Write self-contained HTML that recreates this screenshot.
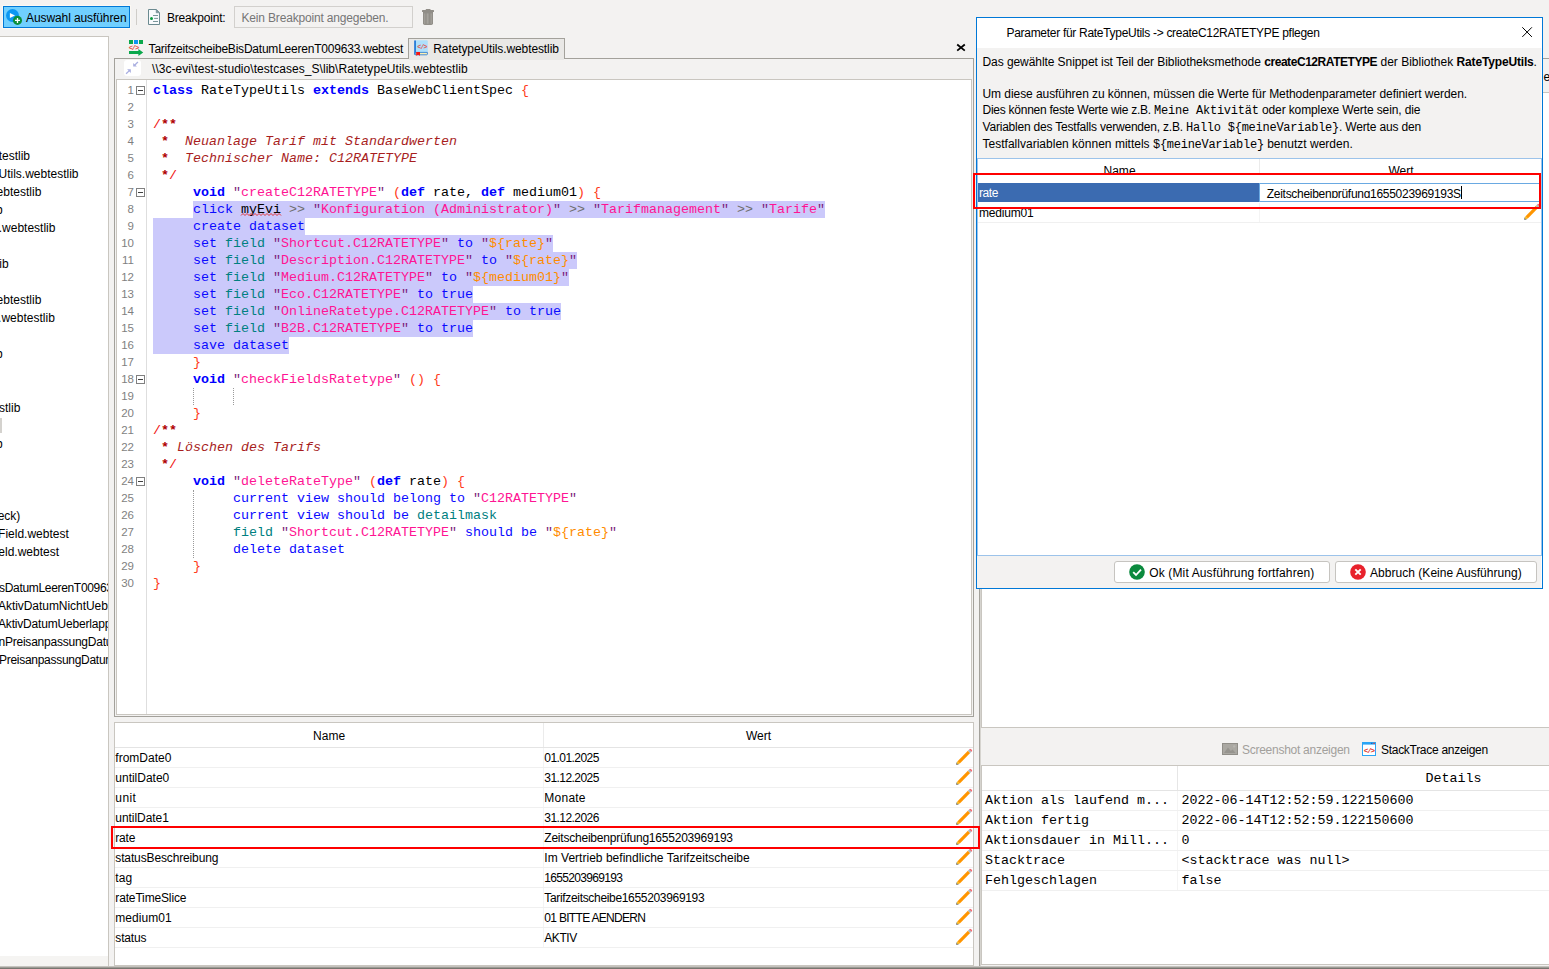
<!DOCTYPE html>
<html lang="de"><head><meta charset="utf-8"><title>Test Studio</title>
<style>
html,body{margin:0;padding:0;}
body{width:1549px;height:969px;overflow:hidden;background:#f3f2f1;font-family:"Liberation Sans", sans-serif;font-size:12px;color:#000;}
.b{position:absolute;box-sizing:border-box;}
.t{position:absolute;white-space:pre;}
.tm{font-family:"Liberation Mono", monospace;}
svg{position:absolute;overflow:visible;}
.c{position:absolute;white-space:pre;font-family:"Liberation Mono", monospace;font-size:13.33px;line-height:17px;height:17px;left:0;}
.ln{position:absolute;font-size:11.5px;line-height:17px;height:17px;color:#7f7f7f;text-align:right;width:40px;}

.k{color:#0000ff;font-weight:bold}.d{color:#0a0aff}.f{color:#008080}.q{color:#7d1f7d}.s{color:#ff1493}
.v{color:#ff8c00}.p{color:#ff3a1a}.g{color:#6e6e6e}.m{color:#b00000;font-weight:bold}.sl{color:#f01010}
.ci{color:#a81e1e;font-style:italic}.id{color:#000}.ib{color:#000;font-weight:bold}
.sel{position:absolute;background:#cbc9fb;height:17px}
.fold{position:absolute;width:9px;height:9px;box-sizing:border-box;border:1px solid #808080;background:#fff;left:19px}
.fold:after{content:"";position:absolute;left:1px;top:3px;width:5px;height:1px;background:#404040}
.ig{position:absolute;width:0;border-left:1px dotted #9a9a9a}
</style></head>
<body>
<div class="b" style="left:0px;top:0px;width:1549px;height:969px;background:#f3f2f1;overflow:hidden;"><div class="b" style="left:3px;top:6px;width:127px;height:22px;background:#70cfff;border:1px solid #0078d7;box-shadow:0 0 0 1px #fbf8f3;"></div>
<svg style="left:5px;top:8px" width="19" height="18" viewBox="0 0 19 18"><circle cx="7.5" cy="7.5" r="6.5" fill="#0c98f2"/><path d="M4.9 4.9 L10 7.5 L4.9 10.1 Z" fill="#fff"/><circle cx="12.5" cy="12.4" r="4.55" fill="#0b8f3c"/><path d="M12.5 9.9 V14.9 M10 12.4 H15" stroke="#fff" stroke-width="1.3"/></svg><span class="t" style="top:10.34px;line-height:17px;left:26.00px;letter-spacing:-0.093px;">Auswahl ausführen</span><div class="b" style="left:136px;top:9px;width:1px;height:16px;background:#cfcdc9;"></div>
<svg style="left:148px;top:9px" width="12" height="16" viewBox="0 0 12 16"><path d="M0.5 0.5 H8.3 L11.5 3.7 V15.5 H0.5 Z" fill="#f8fafc" stroke="#6b8a90" stroke-width="1"/><path d="M8.2 0.6 V3.8 H11.4 Z" fill="#7d989d" stroke="#6b8a90" stroke-width="0.6"/><circle cx="3.5" cy="9.4" r="1.5" fill="#0a9a40"/><path d="M5 6.5 H10 M6.1 9.4 H10 M5 12.5 H10" stroke="#6b8a90" stroke-width="0.9"/></svg><span class="t" style="top:10.34px;line-height:17px;left:167.00px;letter-spacing:-0.200px;">Breakpoint:</span><div class="b" style="left:234px;top:6px;width:179px;height:22px;border:1px solid #d2d0cd;background:#f3f2f1;"></div>
<span class="t" style="top:10.34px;line-height:17px;color:#767676;left:241.50px;letter-spacing:-0.171px;">Kein Breakpoint angegeben.</span><svg style="left:422px;top:9px" width="12" height="16" viewBox="0 0 12 16"><rect x="3.7" y="0" width="4.9" height="1.6" rx="0.6" fill="#908d87"/><rect x="0" y="0.9" width="12" height="2.1" rx="0.5" fill="#908d87"/><path d="M1 3 H11 V14.2 Q11 15.9 9.3 15.9 H2.7 Q1 15.9 1 14.2 Z" fill="#918e88"/><rect x="2" y="4.4" width="1.3" height="10.4" fill="#a19e98"/><rect x="4.7" y="4.4" width="1.9" height="10.4" fill="#a5a29c"/><rect x="8.5" y="4.4" width="1.5" height="10.4" fill="#a19e98"/></svg><div class="b" style="left:-2px;top:36px;width:111px;height:932px;background:#fff;border:1px solid #c9c6c0;overflow:hidden;"><span class="t" style="top:111.34px;line-height:17px;right:78.00px;">webtestlib</span><span class="t" style="top:129.34px;line-height:17px;right:29.50px;">Utils.webtestlib</span><span class="t" style="top:147.34px;line-height:17px;right:66.70px;">webtestlib</span><span class="t" style="top:165.34px;line-height:17px;right:105.40px;">lib</span><span class="t" style="top:183.34px;line-height:17px;right:52.60px;">.webtestlib</span><span class="t" style="top:219.34px;line-height:17px;right:99.30px;">lib</span><span class="t" style="top:255.34px;line-height:17px;right:66.70px;">webtestlib</span><span class="t" style="top:273.34px;line-height:17px;right:53.20px;">.webtestlib</span><span class="t" style="top:309.34px;line-height:17px;right:105.40px;">lib</span><span class="t" style="top:363.34px;line-height:17px;right:87.70px;">testlib</span><span class="t" style="top:399.34px;line-height:17px;right:105.40px;">lib</span><span class="t" style="top:471.34px;line-height:17px;right:87.70px;">check)</span><span class="t" style="top:489.34px;line-height:17px;right:39.20px;">Field.webtest</span><span class="t" style="top:507.34px;line-height:17px;right:49.00px;">Field.webtest</span><span class="t" style="top:543.34px;line-height:17px;left:0.00px;letter-spacing:-0.320px;">sDatumLeerenT0096</span><span class="t" style="top:543.34px;line-height:17px;left:107.30px;">33.webtest</span><span class="t" style="top:561.34px;line-height:17px;left:-1.00px;letter-spacing:-0.050px;">AktivDatumNichtUeb</span><span class="t" style="top:561.34px;line-height:17px;left:108.80px;">erlappend.webtest</span><span class="t" style="top:579.34px;line-height:17px;left:-1.00px;letter-spacing:-0.186px;">AktivDatumUeberlap</span><span class="t" style="top:579.34px;line-height:17px;left:105.70px;">pend.webtest</span><span class="t" style="top:597.34px;line-height:17px;left:-0.50px;letter-spacing:-0.228px;">nPreisanpassungDat</span><span class="t" style="top:597.34px;line-height:17px;left:106.80px;">um.webtest</span><span class="t" style="top:615.34px;line-height:17px;left:0.00px;letter-spacing:-0.284px;">PreisanpassungDatu</span><span class="t" style="top:615.34px;line-height:17px;left:106.30px;">m.webtest</span><div class="b" style="left:1px;top:381px;width:2px;height:15px;background:#d4d2ce;"></div>
<div class="b" style="left:0px;top:919px;width:109px;height:12px;background:#f5f4f2;"></div>
</div>
<div class="b" style="left:114px;top:58px;width:860px;height:1px;background:#a3a19b;"></div>
<div class="b" style="left:408px;top:38px;width:157px;height:21px;background:#e9e8e6;border:1px solid #a3a19b;border-bottom:none;"></div>
<div class="b" style="left:409px;top:58px;width:155px;height:2px;background:#e9e8e6;"></div>
<svg style="left:129px;top:40px" width="15" height="16" viewBox="0 0 15 16"><rect x="0" y="0" width="4" height="4" fill="#0aa84b"/><rect x="5" y="0" width="4" height="4" fill="#0d95f0"/><rect x="10" y="0" width="4" height="4" fill="#0aa84b"/><text x="-0.3" y="9.9" font-family="Liberation Mono" font-size="7" font-weight="bold" fill="#e0483e" letter-spacing="-1.05">&lt;/&gt;</text><path d="M0 11 H9.4 V9 L14.2 12.5 L9.4 16 V14 H0 Z" fill="#0aa84b"/></svg><span class="t" style="top:41.34px;line-height:17px;left:148.60px;letter-spacing:-0.215px;">TarifzeitscheibeBisDatumLeerenT009633.webtest</span><svg style="left:414px;top:40px" width="14" height="16" viewBox="0 0 14 16"><rect x="1.5" y="0.3" width="12.3" height="12.2" rx="1" fill="#aedffb"/><rect x="0.2" y="0.3" width="1.7" height="14.6" rx="0.8" fill="#1a73d6"/><path d="M1.2 12.4 H13.4 V14 Q13.4 14.8 12.6 14.8 H1.2 Z" fill="#ffeeb0" stroke="#1a73d6" stroke-width="0.8"/><path d="M2.2 11.9 H6 V15.8 L4.1 14.8 L2.2 15.8 Z" fill="#f5150f"/><text x="3.2" y="8.6" font-family="Liberation Mono" font-size="6.5" font-weight="bold" fill="#e0584f" letter-spacing="-0.7">&lt;/&gt;</text></svg><span class="t" style="top:41.34px;line-height:17px;left:433.30px;letter-spacing:-0.107px;">RatetypeUtils.webtestlib</span><svg style="left:956px;top:43px" width="10" height="9" viewBox="0 0 10 9"><path d="M1.2 1.5 L8.8 7.6 M8.8 1.5 L1.2 7.6" stroke="#000" stroke-width="1.8"/></svg><div class="b" style="left:114px;top:59px;width:860px;height:658px;border-left:1px solid #a3a19b;border-right:1px solid #a3a19b;border-bottom:1px solid #a3a19b;"></div>
<div class="b" style="left:124px;top:60px;width:17px;height:16px;background:#fff;border-radius:3px;"></div>
<svg style="left:124px;top:60px" width="17" height="16" viewBox="0 0 17 16"><path d="M13.9 2 L10.6 5.2" stroke="#a9aee0" stroke-width="1.3" fill="none"/><path d="M9.2 2.9 V6.6 H12.9 Z" fill="#a9aee0"/><path d="M2.1 13.8 L5.4 10.6" stroke="#a9aee0" stroke-width="1.3" fill="none"/><path d="M3.1 9.3 H6.8 V13 Z" fill="#a9aee0"/></svg><span class="t" style="top:61.34px;line-height:17px;left:152.00px;letter-spacing:0.046px;">\\3c-evi\test-studio\testcases_S\lib\RatetypeUtils.webtestlib</span><div class="b" style="left:116px;top:79px;width:856px;height:636px;background:#fff;border:1px solid #c9c6c0;overflow:hidden;"><div class="b" style="left:29px;top:0;width:1px;height:640px;background:#dedede"></div>
<div class="sel" style="left:76px;top:121px;width:632px"></div>
<div class="sel" style="left:36px;top:138px;width:152px"></div>
<div class="sel" style="left:36px;top:155px;width:400px"></div>
<div class="sel" style="left:36px;top:172px;width:424px"></div>
<div class="sel" style="left:36px;top:189px;width:416px"></div>
<div class="sel" style="left:36px;top:206px;width:320px"></div>
<div class="sel" style="left:36px;top:223px;width:408px"></div>
<div class="sel" style="left:36px;top:240px;width:320px"></div>
<div class="sel" style="left:36px;top:257px;width:136px"></div>
<div class="ig" style="left:76px;top:308px;height:17px"></div>
<div class="ig" style="left:116px;top:308px;height:17px"></div>
<div class="ig" style="left:76px;top:410px;height:68px"></div>
<div class="ln" style="left:-23px;top:1.5px">1</div>
<div class="fold" style="top:6px"></div>
<div class="c" style="left:36px;top:2px"><span class="k">class</span> <span class="id">RateTypeUtils</span> <span class="k">extends</span> <span class="id">BaseWebClientSpec</span> <span class="p">{</span></div>
<div class="ln" style="left:-23px;top:18.5px">2</div>
<div class="ln" style="left:-23px;top:35.5px">3</div>
<div class="c" style="left:36px;top:36px"><span class="sl">/</span><span class="m">**</span></div>
<div class="ln" style="left:-23px;top:52.5px">4</div>
<div class="c" style="left:36px;top:53px"> <span class="m">*</span>  <span class="ci">Neuanlage Tarif mit Standardwerten</span></div>
<div class="ln" style="left:-23px;top:69.5px">5</div>
<div class="c" style="left:36px;top:70px"> <span class="m">*</span>  <span class="ci">Technischer Name: C12RATETYPE</span></div>
<div class="ln" style="left:-23px;top:86.5px">6</div>
<div class="c" style="left:36px;top:87px"> <span class="m">*</span><span class="sl">/</span></div>
<div class="ln" style="left:-23px;top:103.5px">7</div>
<div class="fold" style="top:108px"></div>
<div class="c" style="left:36px;top:104px">     <span class="k">void</span> <span class="q">&quot;</span><span class="s">createC12RATETYPE</span><span class="q">&quot;</span> <span class="p">(</span><span class="k">def</span> <span class="id">rate,</span> <span class="k">def</span> <span class="id">medium01</span><span class="p">)</span> <span class="p">{</span></div>
<div class="ln" style="left:-23px;top:120.5px">8</div>
<div class="c" style="left:36px;top:121px">     <span class="d">click</span> <span class="id">myEvi</span> <span class="g">&gt;&gt;</span> <span class="q">&quot;</span><span class="s">Konfiguration (Administrator)</span><span class="q">&quot;</span> <span class="g">&gt;&gt;</span> <span class="q">&quot;</span><span class="s">Tarifmanagement</span><span class="q">&quot;</span> <span class="g">&gt;&gt;</span> <span class="q">&quot;</span><span class="s">Tarife</span><span class="q">&quot;</span></div>
<div class="ln" style="left:-23px;top:137.5px">9</div>
<div class="c" style="left:36px;top:138px">     <span class="d">create dataset</span></div>
<div class="ln" style="left:-23px;top:154.5px">10</div>
<div class="c" style="left:36px;top:155px">     <span class="d">set</span> <span class="f">field</span> <span class="q">&quot;</span><span class="s">Shortcut.C12RATETYPE</span><span class="q">&quot;</span> <span class="d">to</span> <span class="q">&quot;</span><span class="v">${rate}</span><span class="q">&quot;</span></div>
<div class="ln" style="left:-23px;top:171.5px">11</div>
<div class="c" style="left:36px;top:172px">     <span class="d">set</span> <span class="f">field</span> <span class="q">&quot;</span><span class="s">Description.C12RATETYPE</span><span class="q">&quot;</span> <span class="d">to</span> <span class="q">&quot;</span><span class="v">${rate}</span><span class="q">&quot;</span></div>
<div class="ln" style="left:-23px;top:188.5px">12</div>
<div class="c" style="left:36px;top:189px">     <span class="d">set</span> <span class="f">field</span> <span class="q">&quot;</span><span class="s">Medium.C12RATETYPE</span><span class="q">&quot;</span> <span class="d">to</span> <span class="q">&quot;</span><span class="v">${medium01}</span><span class="q">&quot;</span></div>
<div class="ln" style="left:-23px;top:205.5px">13</div>
<div class="c" style="left:36px;top:206px">     <span class="d">set</span> <span class="f">field</span> <span class="q">&quot;</span><span class="s">Eco.C12RATETYPE</span><span class="q">&quot;</span> <span class="d">to true</span></div>
<div class="ln" style="left:-23px;top:222.5px">14</div>
<div class="c" style="left:36px;top:223px">     <span class="d">set</span> <span class="f">field</span> <span class="q">&quot;</span><span class="s">OnlineRatetype.C12RATETYPE</span><span class="q">&quot;</span> <span class="d">to true</span></div>
<div class="ln" style="left:-23px;top:239.5px">15</div>
<div class="c" style="left:36px;top:240px">     <span class="d">set</span> <span class="f">field</span> <span class="q">&quot;</span><span class="s">B2B.C12RATETYPE</span><span class="q">&quot;</span> <span class="d">to true</span></div>
<div class="ln" style="left:-23px;top:256.5px">16</div>
<div class="c" style="left:36px;top:257px">     <span class="d">save dataset</span></div>
<div class="ln" style="left:-23px;top:273.5px">17</div>
<div class="c" style="left:36px;top:274px">     <span class="p">}</span></div>
<div class="ln" style="left:-23px;top:290.5px">18</div>
<div class="fold" style="top:295px"></div>
<div class="c" style="left:36px;top:291px">     <span class="k">void</span> <span class="q">&quot;</span><span class="s">checkFieldsRatetype</span><span class="q">&quot;</span> <span class="p">()</span> <span class="p">{</span></div>
<div class="ln" style="left:-23px;top:307.5px">19</div>
<div class="ln" style="left:-23px;top:324.5px">20</div>
<div class="c" style="left:36px;top:325px">     <span class="p">}</span></div>
<div class="ln" style="left:-23px;top:341.5px">21</div>
<div class="c" style="left:36px;top:342px"><span class="sl">/</span><span class="m">**</span></div>
<div class="ln" style="left:-23px;top:358.5px">22</div>
<div class="c" style="left:36px;top:359px"> <span class="m">*</span> <span class="ci">Löschen des Tarifs</span></div>
<div class="ln" style="left:-23px;top:375.5px">23</div>
<div class="c" style="left:36px;top:376px"> <span class="m">*</span><span class="sl">/</span></div>
<div class="ln" style="left:-23px;top:392.5px">24</div>
<div class="fold" style="top:397px"></div>
<div class="c" style="left:36px;top:393px">     <span class="k">void</span> <span class="q">&quot;</span><span class="s">deleteRateType</span><span class="q">&quot;</span> <span class="p">(</span><span class="k">def</span> <span class="id">rate</span><span class="p">)</span> <span class="p">{</span></div>
<div class="ln" style="left:-23px;top:409.5px">25</div>
<div class="c" style="left:36px;top:410px">          <span class="d">current view should belong to</span> <span class="q">&quot;</span><span class="s">C12RATETYPE</span><span class="q">&quot;</span></div>
<div class="ln" style="left:-23px;top:426.5px">26</div>
<div class="c" style="left:36px;top:427px">          <span class="d">current view should be</span> <span class="f">detailmask</span></div>
<div class="ln" style="left:-23px;top:443.5px">27</div>
<div class="c" style="left:36px;top:444px">          <span class="f">field</span> <span class="q">&quot;</span><span class="s">Shortcut.C12RATETYPE</span><span class="q">&quot;</span> <span class="d">should be</span> <span class="q">&quot;</span><span class="v">${rate}</span><span class="q">&quot;</span></div>
<div class="ln" style="left:-23px;top:460.5px">28</div>
<div class="c" style="left:36px;top:461px">          <span class="d">delete dataset</span></div>
<div class="ln" style="left:-23px;top:477.5px">29</div>
<div class="c" style="left:36px;top:478px">     <span class="p">}</span></div>
<div class="ln" style="left:-23px;top:494.5px">30</div>
<div class="c" style="left:36px;top:495px"><span class="p">}</span></div>
<svg style="left:124px;top:133px" width="40" height="4" viewBox="0 0 40 4"><path d="M0 2.5 L2 0.5 L4 2.5 L6 0.5 L8 2.5 L10 0.5 L12 2.5 L14 0.5 L16 2.5 L18 0.5 L20 2.5 L22 0.5 L24 2.5 L26 0.5 L28 2.5 L30 0.5 L32 2.5 L34 0.5 L36 2.5 L38 0.5 L40 2.5" fill="none" stroke="#e02020" stroke-width="0.9"/></svg></div>
<div class="b" style="left:979px;top:59px;width:1px;height:907px;background:#a3a19b;"></div>
<div class="b" style="left:980px;top:59px;width:1px;height:907px;background:#d6d4cf;"></div>
<div class="b" style="left:979px;top:58px;width:580px;height:1px;background:#a3a19b;"></div>
<div class="b" style="left:981px;top:92px;width:580px;height:636px;background:#fff;border:1px solid #c9c6c0;"></div>
<span class="t" style="top:69.34px;line-height:17px;left:1543.50px;">e</span><div class="b" style="left:114px;top:722px;width:860px;height:244px;background:#fff;border:1px solid #c9c6c0;overflow:hidden;"><div class="b" style="left:428px;top:0px;width:1px;height:25px;background:#ebebeb;"></div>
<div class="b" style="left:0px;top:24px;width:858px;height:1px;background:#e4e4e4;"></div>
<span class="t" style="top:5.34px;line-height:17px;left:198.00px;letter-spacing:0.071px;">Name</span><span class="t" style="top:5.34px;line-height:17px;left:631.00px;letter-spacing:-0.031px;">Wert</span><div class="b" style="left:0px;top:44px;width:858px;height:1px;background:#f0f0f0;"></div>
<div class="b" style="left:428px;top:25px;width:1px;height:19px;background:#f4f4f4;"></div>
<span class="t" style="top:27.34px;line-height:17px;left:0.30px;">fromDate0</span><span class="t" style="top:27.34px;line-height:17px;left:429.30px;letter-spacing:-0.556px;">01.01.2025</span><svg style="left:841px;top:26px" width="16" height="16" viewBox="0 0 16 16"><g transform="translate(0.3,15.7) rotate(-45)"><path d="M0 0 L2.6 -1.6 L2.6 1.6 Z" fill="#15130f"/><path d="M1.3 -0.8 L3.6 -1.6 V1.6 L1.3 0.8 Z" fill="#ffc42e"/><rect x="3.4" y="-1.6" width="14.6" height="3.2" fill="#ff9500"/><rect x="18" y="-1.6" width="1.8" height="3.2" fill="#a9bcc4"/><path d="M19.8 -1.6 H21 Q22.2 0 21 1.6 H19.8 Z" fill="#f0636b"/></g></svg><div class="b" style="left:0px;top:64px;width:858px;height:1px;background:#f0f0f0;"></div>
<div class="b" style="left:428px;top:45px;width:1px;height:19px;background:#f4f4f4;"></div>
<span class="t" style="top:47.34px;line-height:17px;left:0.30px;letter-spacing:-0.005px;">untilDate0</span><span class="t" style="top:47.34px;line-height:17px;left:429.30px;letter-spacing:-0.556px;">31.12.2025</span><svg style="left:841px;top:46px" width="16" height="16" viewBox="0 0 16 16"><g transform="translate(0.3,15.7) rotate(-45)"><path d="M0 0 L2.6 -1.6 L2.6 1.6 Z" fill="#15130f"/><path d="M1.3 -0.8 L3.6 -1.6 V1.6 L1.3 0.8 Z" fill="#ffc42e"/><rect x="3.4" y="-1.6" width="14.6" height="3.2" fill="#ff9500"/><rect x="18" y="-1.6" width="1.8" height="3.2" fill="#a9bcc4"/><path d="M19.8 -1.6 H21 Q22.2 0 21 1.6 H19.8 Z" fill="#f0636b"/></g></svg><div class="b" style="left:0px;top:84px;width:858px;height:1px;background:#f0f0f0;"></div>
<div class="b" style="left:428px;top:65px;width:1px;height:19px;background:#f4f4f4;"></div>
<span class="t" style="top:67.34px;line-height:17px;left:0.30px;letter-spacing:0.410px;">unit</span><span class="t" style="top:67.34px;line-height:17px;left:429.30px;letter-spacing:0.245px;">Monate</span><svg style="left:841px;top:66px" width="16" height="16" viewBox="0 0 16 16"><g transform="translate(0.3,15.7) rotate(-45)"><path d="M0 0 L2.6 -1.6 L2.6 1.6 Z" fill="#15130f"/><path d="M1.3 -0.8 L3.6 -1.6 V1.6 L1.3 0.8 Z" fill="#ffc42e"/><rect x="3.4" y="-1.6" width="14.6" height="3.2" fill="#ff9500"/><rect x="18" y="-1.6" width="1.8" height="3.2" fill="#a9bcc4"/><path d="M19.8 -1.6 H21 Q22.2 0 21 1.6 H19.8 Z" fill="#f0636b"/></g></svg><div class="b" style="left:0px;top:104px;width:858px;height:1px;background:#f0f0f0;"></div>
<div class="b" style="left:428px;top:85px;width:1px;height:19px;background:#f4f4f4;"></div>
<span class="t" style="top:87.34px;line-height:17px;left:0.30px;letter-spacing:-0.055px;">untilDate1</span><span class="t" style="top:87.34px;line-height:17px;left:429.30px;letter-spacing:-0.556px;">31.12.2026</span><svg style="left:841px;top:86px" width="16" height="16" viewBox="0 0 16 16"><g transform="translate(0.3,15.7) rotate(-45)"><path d="M0 0 L2.6 -1.6 L2.6 1.6 Z" fill="#15130f"/><path d="M1.3 -0.8 L3.6 -1.6 V1.6 L1.3 0.8 Z" fill="#ffc42e"/><rect x="3.4" y="-1.6" width="14.6" height="3.2" fill="#ff9500"/><rect x="18" y="-1.6" width="1.8" height="3.2" fill="#a9bcc4"/><path d="M19.8 -1.6 H21 Q22.2 0 21 1.6 H19.8 Z" fill="#f0636b"/></g></svg><div class="b" style="left:0px;top:124px;width:858px;height:1px;background:#f0f0f0;"></div>
<div class="b" style="left:428px;top:105px;width:1px;height:19px;background:#f4f4f4;"></div>
<span class="t" style="top:107.34px;line-height:17px;left:0.30px;letter-spacing:-0.172px;">rate</span><span class="t" style="top:107.34px;line-height:17px;left:429.30px;letter-spacing:-0.219px;">Zeitscheibenprüfung1655203969193</span><svg style="left:841px;top:106px" width="16" height="16" viewBox="0 0 16 16"><g transform="translate(0.3,15.7) rotate(-45)"><path d="M0 0 L2.6 -1.6 L2.6 1.6 Z" fill="#15130f"/><path d="M1.3 -0.8 L3.6 -1.6 V1.6 L1.3 0.8 Z" fill="#ffc42e"/><rect x="3.4" y="-1.6" width="14.6" height="3.2" fill="#ff9500"/><rect x="18" y="-1.6" width="1.8" height="3.2" fill="#a9bcc4"/><path d="M19.8 -1.6 H21 Q22.2 0 21 1.6 H19.8 Z" fill="#f0636b"/></g></svg><div class="b" style="left:0px;top:144px;width:858px;height:1px;background:#f0f0f0;"></div>
<div class="b" style="left:428px;top:125px;width:1px;height:19px;background:#f4f4f4;"></div>
<span class="t" style="top:127.34px;line-height:17px;left:0.30px;letter-spacing:-0.134px;">statusBeschreibung</span><span class="t" style="top:127.34px;line-height:17px;left:429.30px;letter-spacing:0.023px;">Im Vertrieb befindliche Tarifzeitscheibe</span><svg style="left:841px;top:126px" width="16" height="16" viewBox="0 0 16 16"><g transform="translate(0.3,15.7) rotate(-45)"><path d="M0 0 L2.6 -1.6 L2.6 1.6 Z" fill="#15130f"/><path d="M1.3 -0.8 L3.6 -1.6 V1.6 L1.3 0.8 Z" fill="#ffc42e"/><rect x="3.4" y="-1.6" width="14.6" height="3.2" fill="#ff9500"/><rect x="18" y="-1.6" width="1.8" height="3.2" fill="#a9bcc4"/><path d="M19.8 -1.6 H21 Q22.2 0 21 1.6 H19.8 Z" fill="#f0636b"/></g></svg><div class="b" style="left:0px;top:164px;width:858px;height:1px;background:#f0f0f0;"></div>
<div class="b" style="left:428px;top:145px;width:1px;height:19px;background:#f4f4f4;"></div>
<span class="t" style="top:147.34px;line-height:17px;left:0.30px;letter-spacing:0.104px;">tag</span><span class="t" style="top:147.34px;line-height:17px;left:429.30px;letter-spacing:-0.674px;">1655203969193</span><svg style="left:841px;top:146px" width="16" height="16" viewBox="0 0 16 16"><g transform="translate(0.3,15.7) rotate(-45)"><path d="M0 0 L2.6 -1.6 L2.6 1.6 Z" fill="#15130f"/><path d="M1.3 -0.8 L3.6 -1.6 V1.6 L1.3 0.8 Z" fill="#ffc42e"/><rect x="3.4" y="-1.6" width="14.6" height="3.2" fill="#ff9500"/><rect x="18" y="-1.6" width="1.8" height="3.2" fill="#a9bcc4"/><path d="M19.8 -1.6 H21 Q22.2 0 21 1.6 H19.8 Z" fill="#f0636b"/></g></svg><div class="b" style="left:0px;top:184px;width:858px;height:1px;background:#f0f0f0;"></div>
<div class="b" style="left:428px;top:165px;width:1px;height:19px;background:#f4f4f4;"></div>
<span class="t" style="top:167.34px;line-height:17px;left:0.30px;letter-spacing:-0.148px;">rateTimeSlice</span><span class="t" style="top:167.34px;line-height:17px;left:429.30px;letter-spacing:-0.327px;">Tarifzeitscheibe1655203969193</span><svg style="left:841px;top:166px" width="16" height="16" viewBox="0 0 16 16"><g transform="translate(0.3,15.7) rotate(-45)"><path d="M0 0 L2.6 -1.6 L2.6 1.6 Z" fill="#15130f"/><path d="M1.3 -0.8 L3.6 -1.6 V1.6 L1.3 0.8 Z" fill="#ffc42e"/><rect x="3.4" y="-1.6" width="14.6" height="3.2" fill="#ff9500"/><rect x="18" y="-1.6" width="1.8" height="3.2" fill="#a9bcc4"/><path d="M19.8 -1.6 H21 Q22.2 0 21 1.6 H19.8 Z" fill="#f0636b"/></g></svg><div class="b" style="left:0px;top:204px;width:858px;height:1px;background:#f0f0f0;"></div>
<div class="b" style="left:428px;top:185px;width:1px;height:19px;background:#f4f4f4;"></div>
<span class="t" style="top:187.34px;line-height:17px;left:0.30px;letter-spacing:0.059px;">medium01</span><span class="t" style="top:187.34px;line-height:17px;left:429.30px;letter-spacing:-0.689px;">01 BITTE AENDERN</span><svg style="left:841px;top:186px" width="16" height="16" viewBox="0 0 16 16"><g transform="translate(0.3,15.7) rotate(-45)"><path d="M0 0 L2.6 -1.6 L2.6 1.6 Z" fill="#15130f"/><path d="M1.3 -0.8 L3.6 -1.6 V1.6 L1.3 0.8 Z" fill="#ffc42e"/><rect x="3.4" y="-1.6" width="14.6" height="3.2" fill="#ff9500"/><rect x="18" y="-1.6" width="1.8" height="3.2" fill="#a9bcc4"/><path d="M19.8 -1.6 H21 Q22.2 0 21 1.6 H19.8 Z" fill="#f0636b"/></g></svg><div class="b" style="left:0px;top:224px;width:858px;height:1px;background:#f0f0f0;"></div>
<div class="b" style="left:428px;top:205px;width:1px;height:19px;background:#f4f4f4;"></div>
<span class="t" style="top:207.34px;line-height:17px;left:0.30px;letter-spacing:-0.169px;">status</span><span class="t" style="top:207.34px;line-height:17px;left:429.30px;letter-spacing:-0.438px;">AKTIV</span><svg style="left:841px;top:206px" width="16" height="16" viewBox="0 0 16 16"><g transform="translate(0.3,15.7) rotate(-45)"><path d="M0 0 L2.6 -1.6 L2.6 1.6 Z" fill="#15130f"/><path d="M1.3 -0.8 L3.6 -1.6 V1.6 L1.3 0.8 Z" fill="#ffc42e"/><rect x="3.4" y="-1.6" width="14.6" height="3.2" fill="#ff9500"/><rect x="18" y="-1.6" width="1.8" height="3.2" fill="#a9bcc4"/><path d="M19.8 -1.6 H21 Q22.2 0 21 1.6 H19.8 Z" fill="#f0636b"/></g></svg></div>
<div class="b" style="left:111px;top:826px;width:869px;height:23px;border:2px solid #fe0000;"></div>
<svg style="left:1222px;top:743px" width="16" height="12" viewBox="0 0 16 12"><rect x="0.5" y="0.5" width="15" height="11" fill="#aaa8a2" stroke="#908e88" stroke-width="1"/><path d="M2 10 L6 4.6 L8.8 8 L10.6 6.4 L13.6 10 Z" fill="#96948e"/><circle cx="12.2" cy="3.4" r="1.2" fill="#b8b6b0"/></svg><span class="t" style="top:742.34px;line-height:17px;color:#a2a09c;left:1242.00px;letter-spacing:-0.266px;">Screenshot anzeigen</span><svg style="left:1362px;top:742px" width="14" height="14" viewBox="0 0 14 14"><rect x="0.5" y="0.5" width="13" height="13" fill="#fff" stroke="#2aa5f5" stroke-width="1"/><rect x="0" y="0" width="14" height="2.6" fill="#2aa5f5"/><rect x="11.4" y="0.8" width="1.4" height="1.2" fill="#e53935"/><rect x="9" y="0.8" width="1.4" height="1.2" fill="#1565c0"/><text x="1.7" y="10.9" font-family="Liberation Mono" font-size="7.6" font-weight="bold" fill="#e0362c" letter-spacing="-1.1">&lt;/&gt;</text></svg><span class="t" style="top:742.34px;line-height:17px;left:1381.00px;letter-spacing:-0.289px;">StackTrace anzeigen</span><div class="b" style="left:981px;top:765px;width:580px;height:200px;background:#fff;border:1px solid #c9c6c0;overflow:hidden;"><div class="b" style="left:195px;top:0px;width:1px;height:24px;background:#e6e6e6;"></div>
<div class="b" style="left:0px;top:24px;width:570px;height:1px;background:#e4e4e4;"></div>
<span class="t tm" style="top:2.94px;font-size:13.333px;line-height:19px;left:443.50px;">Details</span><div class="b" style="left:0px;top:44px;width:570px;height:1px;background:#f0f0f0;"></div>
<div class="b" style="left:195px;top:25px;width:1px;height:19px;background:#f4f4f4;"></div>
<span class="t tm" style="top:24.94px;font-size:13.333px;line-height:19px;left:3.00px;">Aktion als laufend m...</span><span class="t tm" style="top:24.94px;font-size:13.333px;line-height:19px;left:199.50px;">2022-06-14T12:52:59.122150600</span><div class="b" style="left:0px;top:64px;width:570px;height:1px;background:#f0f0f0;"></div>
<div class="b" style="left:195px;top:45px;width:1px;height:19px;background:#f4f4f4;"></div>
<span class="t tm" style="top:44.94px;font-size:13.333px;line-height:19px;left:3.00px;">Aktion fertig</span><span class="t tm" style="top:44.94px;font-size:13.333px;line-height:19px;left:199.50px;">2022-06-14T12:52:59.122150600</span><div class="b" style="left:0px;top:84px;width:570px;height:1px;background:#f0f0f0;"></div>
<div class="b" style="left:195px;top:65px;width:1px;height:19px;background:#f4f4f4;"></div>
<span class="t tm" style="top:64.94px;font-size:13.333px;line-height:19px;left:3.00px;">Aktionsdauer in Mill...</span><span class="t tm" style="top:64.94px;font-size:13.333px;line-height:19px;left:199.50px;">0</span><div class="b" style="left:0px;top:104px;width:570px;height:1px;background:#f0f0f0;"></div>
<div class="b" style="left:195px;top:85px;width:1px;height:19px;background:#f4f4f4;"></div>
<span class="t tm" style="top:84.94px;font-size:13.333px;line-height:19px;left:3.00px;">Stacktrace</span><span class="t tm" style="top:84.94px;font-size:13.333px;line-height:19px;left:199.50px;">&lt;stacktrace was null&gt;</span><div class="b" style="left:0px;top:124px;width:570px;height:1px;background:#f0f0f0;"></div>
<div class="b" style="left:195px;top:105px;width:1px;height:19px;background:#f4f4f4;"></div>
<span class="t tm" style="top:104.94px;font-size:13.333px;line-height:19px;left:3.00px;">Fehlgeschlagen</span><span class="t tm" style="top:104.94px;font-size:13.333px;line-height:19px;left:199.50px;">false</span></div>
<div class="b" style="left:0px;top:966px;width:1549px;height:1px;background:#c5c3be;"></div>
<div class="b" style="left:0px;top:967px;width:1549px;height:1px;background:#9d9b95;"></div>
<div class="b" style="left:0px;top:968px;width:1549px;height:1px;background:#787670;"></div>
<div class="b" style="left:976px;top:17px;width:567px;height:572px;background:#f3f2f1;border:1px solid #0078d7;"><div class="b" style="left:0px;top:0px;width:565px;height:30px;background:#fff;"></div>
<div class="b" style="left:564px;top:30px;width:1px;height:540px;background:#fbfbfa;"></div>
<span class="t" style="top:7.34px;line-height:17px;left:29.50px;letter-spacing:-0.296px;">Parameter für RateTypeUtils -&gt; createC12RATETYPE pflegen</span><svg style="left:545px;top:9px" width="10" height="10" viewBox="0 0 10 10"><path d="M0.3 0.3 L9.9 9.9 M9.9 0.3 L0.3 9.9" stroke="#000" stroke-width="1"/></svg><span class="t" style="top:36.34px;line-height:17px;left:5.50px;letter-spacing:-0.071px;">Das gewählte Snippet ist Teil der Bibliotheksmethode </span><span class="t" style="top:36.34px;line-height:17px;font-weight:bold;left:287.20px;letter-spacing:-0.441px;">createC12RATETYPE</span><span class="t" style="top:36.34px;line-height:17px;left:400.20px;letter-spacing:-0.006px;"> der Bibliothek </span><span class="t" style="top:36.34px;line-height:17px;font-weight:bold;left:479.60px;letter-spacing:-0.165px;">RateTypeUtils</span><span class="t" style="top:36.34px;line-height:17px;left:556.60px;">.</span><span class="t" style="top:68.34px;line-height:17px;left:5.50px;letter-spacing:-0.064px;">Um diese ausführen zu können, müssen die Werte für Methodenparameter definiert werden.</span><span class="t" style="top:84.34px;line-height:17px;left:5.50px;letter-spacing:-0.253px;">Dies können feste Werte wie z.B. </span><span class="t tm" style="top:85.30px;line-height:17px;left:177.00px;letter-spacing:-0.215px;">Meine Aktivität</span><span class="t" style="top:84.34px;line-height:17px;left:281.80px;letter-spacing:-0.123px;"> oder komplexe Werte sein, die</span><span class="t" style="top:100.84px;line-height:17px;left:5.50px;letter-spacing:-0.204px;">Variablen des Testfalls verwenden, z.B. </span><span class="t tm" style="top:101.80px;line-height:17px;left:209.00px;letter-spacing:-0.247px;">Hallo ${meineVariable}</span><span class="t" style="top:100.84px;line-height:17px;left:362.00px;letter-spacing:-0.167px;">. Werte aus den</span><span class="t" style="top:118.34px;line-height:17px;left:5.50px;letter-spacing:0.012px;">Testfallvariablen können mittels </span><span class="t tm" style="top:119.30px;line-height:17px;left:176.00px;letter-spacing:-0.276px;">${meineVariable}</span><span class="t" style="top:118.34px;line-height:17px;left:286.80px;letter-spacing:0.017px;"> benutzt werden.</span><div class="b" style="left:0px;top:140px;width:565px;height:398px;background:#fff;border:1px solid #9cc3ea;overflow:hidden;"><div class="b" style="left:281px;top:0px;width:1px;height:24px;background:#ebebeb;"></div>
<span class="t" style="top:4.34px;line-height:17px;left:125.40px;letter-spacing:0.071px;">Name</span><span class="t" style="top:4.34px;line-height:17px;left:410.50px;letter-spacing:-0.031px;">Wert</span><div class="b" style="left:0px;top:16px;width:563px;height:8px;background:#fff;"></div>
<div class="b" style="left:0px;top:24px;width:281px;height:19px;background:#3b6bb1;"></div>
<span class="t" style="top:26.34px;line-height:17px;color:#fff;left:1.00px;letter-spacing:-0.422px;">rate</span><div class="b" style="left:281px;top:24px;width:285px;height:19px;background:#fff;border:1px solid #6aa9e2;overflow:hidden;"><div class="b" style="left:0px;top:0px;width:283px;height:14px;overflow:hidden;"><span class="t" style="top:1.94px;line-height:17px;left:6.80px;letter-spacing:-0.288px;">Zeitscheibenprüfung1655023969193S</span></div>
<div class="b" style="left:201px;top:2px;width:1px;height:13px;background:#000;"></div>
</div>
<span class="t" style="top:45.94px;line-height:17px;left:1.00px;letter-spacing:-0.179px;">medium01</span><div class="b" style="left:0px;top:63px;width:563px;height:1px;background:#f0f0f0;"></div>
<div class="b" style="left:281px;top:44px;width:1px;height:19px;background:#f4f4f4;"></div>
<svg style="left:546px;top:45px" width="16" height="16" viewBox="0 0 16 16"><g transform="translate(0.3,15.7) rotate(-45)"><path d="M0 0 L2.6 -1.6 L2.6 1.6 Z" fill="#15130f"/><path d="M1.3 -0.8 L3.6 -1.6 V1.6 L1.3 0.8 Z" fill="#ffc42e"/><rect x="3.4" y="-1.6" width="14.6" height="3.2" fill="#ff9500"/><rect x="18" y="-1.6" width="1.8" height="3.2" fill="#a9bcc4"/><path d="M19.8 -1.6 H21 Q22.2 0 21 1.6 H19.8 Z" fill="#f0636b"/></g></svg></div>
<div class="b" style="left:137px;top:543px;width:216px;height:22px;background:#fff;border:1px solid #c6c4c0;border-radius:3px;"></div>
<span class="t" style="top:547.34px;line-height:17px;left:172.30px;letter-spacing:0.126px;">Ok (Mit Ausführung fortfahren)</span><svg style="left:152px;top:546px" width="16" height="16" viewBox="0 0 16 16"><circle cx="8" cy="8" r="7.8" fill="#0b8a3e"/><path d="M4.2 8.2 L7 11 L12 5.6" fill="none" stroke="#fff" stroke-width="1.8"/></svg><div class="b" style="left:358px;top:543px;width:202px;height:22px;background:#fff;border:1px solid #c6c4c0;border-radius:3px;"></div>
<span class="t" style="top:547.34px;line-height:17px;left:393.00px;letter-spacing:0.036px;">Abbruch (Keine Ausführung)</span><svg style="left:373px;top:546px" width="16" height="16" viewBox="0 0 16 16"><circle cx="8" cy="8" r="7.8" fill="#e8222c"/><path d="M5.3 5.3 L10.7 10.7 M10.7 5.3 L5.3 10.7" fill="none" stroke="#fff" stroke-width="1.9"/></svg></div>
<div class="b" style="left:973px;top:173px;width:568px;height:36px;border:2px solid #fe0000;"></div>
</div>
</body></html>
